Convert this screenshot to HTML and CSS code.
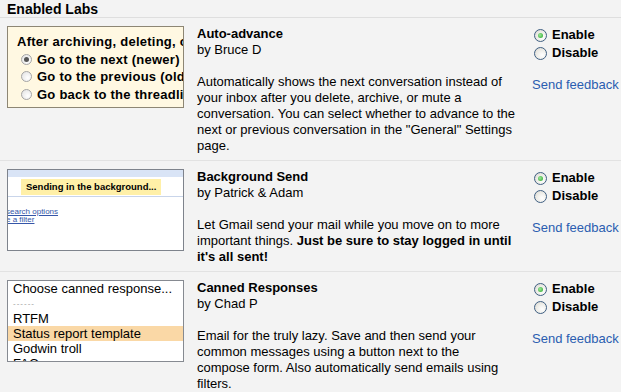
FILE: index.html
```
<!DOCTYPE html>
<html>
<head>
	<meta charset="UTF-8">
	<title>Enabled Labs</title>
<link rel="stylesheet" href="styles.css">
</head>
<body>
<div class="labs">
	<div class="heading">Enabled Labs</div>

	<div class="lab">
		<div class="thumb thumb-advance">
			<div class="adv-title">After archiving, deleting, or</div>
			<div class="adv-opt"><span class="mini-radio on"></span>Go to the next (newer)</div>
			<div class="adv-opt"><span class="mini-radio"></span>Go to the previous (olde</div>
			<div class="adv-opt"><span class="mini-radio"></span>Go back to the threadlis</div>
		</div>
		<div class="info">
			<div class="name">Auto-advance</div>
			<div class="author">by Bruce D</div>
			<p class="desc">Automatically shows the next conversation instead of<br>
			your inbox after you delete, archive, or mute a<br>
			conversation. You can select whether to advance to the<br>
			next or previous conversation in the "General" Settings<br>
			page.</p>
		</div>
		<div class="controls">
			<label class="opt"><span class="radio on"></span>Enable</label>
			<label class="opt"><span class="radio"></span>Disable</label>
			<a class="feedback" href="#">Send feedback</a>
		</div>
	</div>

	<div class="lab">
		<div class="thumb thumb-send">
			<div class="send-band"></div>
			<div class="send-bar"><span class="send-pill">Sending in the background...</span></div>
			<div class="send-links">
				<a href="#">search options</a>
				<a href="#">e a filter</a>
			</div>
		</div>
		<div class="info">
			<div class="name">Background Send</div>
			<div class="author">by Patrick &amp; Adam</div>
			<p class="desc">Let Gmail send your mail while you move on to more<br>
			important things. <b>Just be sure to stay logged in until<br>
			it's all sent!</b></p>
		</div>
		<div class="controls">
			<label class="opt"><span class="radio on"></span>Enable</label>
			<label class="opt"><span class="radio"></span>Disable</label>
			<a class="feedback" href="#">Send feedback</a>
		</div>
	</div>

	<div class="lab">
		<div class="thumb thumb-canned">
			<div class="item">Choose canned response...</div>
			<div class="item dashes">------</div>
			<div class="item">RTFM</div>
			<div class="item selected">Status report template</div>
			<div class="item">Godwin troll</div>
			<div class="item">FAQ</div>
		</div>
		<div class="info">
			<div class="name">Canned Responses</div>
			<div class="author">by Chad P</div>
			<p class="desc">Email for the truly lazy. Save and then send your<br>
			common messages using a button next to the<br>
			compose form. Also automatically send emails using<br>
			filters.</p>
		</div>
		<div class="controls">
			<label class="opt"><span class="radio on"></span>Enable</label>
			<label class="opt"><span class="radio"></span>Disable</label>
			<a class="feedback" href="#">Send feedback</a>
		</div>
	</div>
</div>
</body>
</html>
```

FILE: styles.css
```
html{font:13px/16px "Liberation Sans",Arial,sans-serif;color:#000;}
body{margin:0;background:#f3f3f3;}

.heading{padding:2px 7px 0;font-size:14px;font-weight:bold;line-height:15px;border-bottom:1px solid #dedede;}

.lab{display:flex;padding:8px 7px 6px;border-bottom:1px solid #e2e2e2;}
.thumb{flex:none;box-sizing:border-box;width:177px;height:82px;margin-right:13px;overflow:hidden;white-space:nowrap;}
.info{flex:none;width:321px;white-space:nowrap;}
.name{font-weight:bold;}
.desc{margin:16px 0 0;}
.controls{flex:none;margin-left:14px;white-space:nowrap;}

.opt{display:flex;align-items:center;height:18px;font-weight:bold;}
.radio{flex:none;position:relative;box-sizing:border-box;width:13px;height:13px;margin:0 5px 0 2px;border:1px solid #3f5f82;border-radius:50%;background:radial-gradient(circle at 65% 65%,#fff 0,#ecebe6 55%,#d2d0c8 100%);}
.radio.on::after{content:"";position:absolute;left:3px;top:3px;width:5px;height:5px;border-radius:50%;background:radial-gradient(circle at 40% 40%,#9de89a,#25a425);}
.feedback{display:block;margin-top:15px;color:#2a5db0;text-decoration:none;}

/* auto-advance preview */
.thumb-advance{padding:6px 0 0 9px;background:#fff8e2;border:1px solid #8d8674;font-weight:bold;line-height:17.5px;letter-spacing:0.25px;}
.adv-opt{display:flex;align-items:center;padding-left:4px;}
.mini-radio{flex:none;position:relative;box-sizing:border-box;width:11px;height:11px;margin-right:5px;border:1px solid #a5a5a5;border-radius:50%;background:radial-gradient(circle at 65% 65%,#fff,#e0e0e0);}
.mini-radio.on::after{content:"";position:absolute;left:2px;top:2px;width:5px;height:5px;border-radius:50%;background:#555;}

/* background send preview */
.thumb-send{background:#fff;border:1px solid #7e838c;}
.send-band{height:7px;background:#d9e4f6;}
.send-bar{padding:1px 0 1px 13px;border-bottom:1px solid #c9d5ea;}
.send-pill{display:inline-block;width:140px;height:16px;box-sizing:border-box;padding-left:5px;background:#fff0a8;font-size:9.5px;font-weight:bold;line-height:16px;}
.send-links{padding-top:11px;margin-left:-2px;font-size:8px;line-height:8px;}
.send-links a{display:block;color:#3556a8;}

/* canned responses preview */
.thumb-canned{background:#fff;border:1px solid #868a91;line-height:15px;}
.item{padding-left:5px;}
.dashes{color:#9a9a9a;font-size:8px;letter-spacing:1px;}
.selected{background:#fad8a6;}
```
